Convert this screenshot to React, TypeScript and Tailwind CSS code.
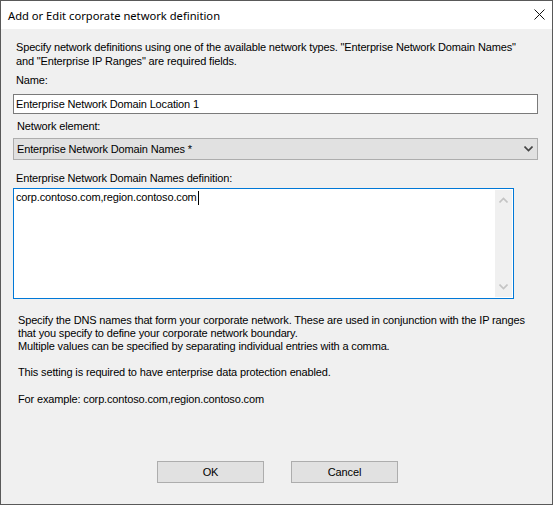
import React from 'react';

const body = { fontFamily: '"Liberation Sans", Arial, sans-serif' };

function Chevron({ up, className }: { up?: boolean; className?: string }) {
  return (
    <svg width="9" height="6" viewBox="0 0 9 6" className={className}>
      <path
        d={up ? 'M0.5 5.5 L4.5 1.5 L8.5 5.5' : 'M0.5 0.5 L4.5 4.5 L8.5 0.5'}
        fill="none"
        stroke="currentColor"
        strokeWidth="1.6"
      />
    </svg>
  );
}

export default function App() {
  return (
    <div
      className="w-[553px] h-[505px] border border-[#595959] bg-[#f0f0f0] flex flex-col text-[11px] leading-[13px] tracking-[-0.15px] text-black whitespace-nowrap"
      style={body}
    >
      {/* title bar */}
      <div className="h-[28px] bg-white flex items-center justify-between pl-[7px] pr-[7px] shrink-0">
        <span className="text-[11.2px] tracking-normal text-black" style={{ fontFamily: '"Noto Sans", sans-serif' }}>
          Add or Edit corporate network definition
        </span>
        <svg width="11" height="11" viewBox="0 0 11 11" className="mt-[-1px]">
          <path d="M0.5 0.5 L10.5 10.5 M10.5 0.5 L0.5 10.5" stroke="#111" strokeWidth="1" />
        </svg>
      </div>

      <div className="flex flex-col pl-[12px] pr-[14px] flex-1">
        <p className="mt-[11px] ml-[3px] leading-[14px]">
          Specify network definitions using one of the available network types. "Enterprise Network Domain Names"
          <br />
          and "Enterprise IP Ranges" are required fields.
        </p>

        <div className="mt-[6px] ml-[3px]">Name:</div>
        <div className="mt-[7px] h-[20px] border border-[#7a7a7a] bg-white flex items-center pl-[2px]">
          Enterprise Network Domain Location 1
        </div>

        <div className="mt-[6px] ml-[4px]">Network element:</div>
        <div className="mt-[5px] h-[22px] border border-[#adadad] bg-[#e1e1e1] flex items-center justify-between pl-[3px] pr-[4px]">
          <span>Enterprise Network Domain Names *</span>
          <Chevron className="text-[#444]" />
        </div>

        <div className="mt-[12px] ml-[3px]">Enterprise Network Domain Names definition:</div>
        <div className="mt-[3px] w-[501px] h-[111px] border border-[#0078d7] bg-white flex">
          <div className="flex-1 pl-[2px] pt-[2px] flex items-start">
            <span>corp.contoso.com,region.contoso.com</span>
            <span className="inline-block w-px h-[14px] bg-black ml-[1px]" />
          </div>
          <div className="w-[17px] my-px mr-px bg-[#f0f0f0] flex flex-col items-center justify-between py-[6px] text-[#c4c4c4]">
            <Chevron up className="mt-[1px]" />
            <Chevron className="mb-[1px]" />
          </div>
        </div>

        <div className="mt-[15px] ml-[5px]">
          <p>
            Specify the DNS names that form your corporate network. These are used in conjunction with the IP ranges
            <br />
            that you specify to define your corporate network boundary.
            <br />
            Multiple values can be specified by separating individual entries with a comma.
          </p>
          <p className="mt-[13px]">This setting is required to have enterprise data protection enabled.</p>
          <p className="mt-[14px]">For example: corp.contoso.com,region.contoso.com</p>
        </div>

        <div className="mt-auto mb-[21px] flex justify-center gap-[27px] pl-[4px]">
          <button className="w-[107px] h-[22px] border border-[#adadad] bg-[#e1e1e1] text-[11px]" style={body}>
            OK
          </button>
          <button className="w-[107px] h-[22px] border border-[#adadad] bg-[#e1e1e1] text-[11px]" style={body}>
            Cancel
          </button>
        </div>
      </div>
    </div>
  );
}
